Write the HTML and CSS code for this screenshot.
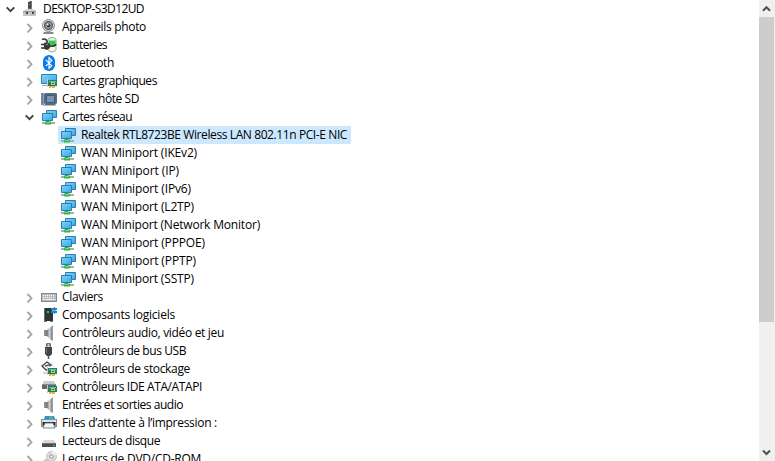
FILE: index.html
```
<!DOCTYPE html>
<html lang="fr">
<head>
<meta charset="utf-8">
<title>Gestionnaire de périphériques</title>
<link rel="stylesheet" href="styles.css">
</head>
<body>
<svg class="sprite" aria-hidden="true">
  <defs>
    <linearGradient id="blue" x1="0" y1="0" x2="1" y2="1"><stop offset="0" stop-color="#7fd6fb"/><stop offset="1" stop-color="#36a6e6"/></linearGradient>
    <linearGradient id="cone" x1="0" x2="1"><stop offset="0" stop-color="#777"/><stop offset=".5" stop-color="#d0d0d0"/><stop offset="1" stop-color="#858585"/></linearGradient>
  </defs>
  <symbol id="closed" viewBox="0 0 10 18"><path d="M2.500 6l4 4.200-4 4.200" fill="none" stroke="#a6a6a6" stroke-width="1.900"/></symbol>
  <symbol id="open" viewBox="0 0 10 18"><path d="M.700 7.300l3.800 3.800 3.800-3.800" fill="none" stroke="#404040" stroke-width="1.900"/></symbol>
  <symbol id="card" viewBox="0 0 10 9"><path d="M0 0h1v8H0z" fill="#c5c9c6"/><path d="M1 1h9v6H1z" fill="#2b7d5c"/><path d="M2 2h7v1H2z" fill="#6bbb92"/><path d="M4 3h4v3H4z" fill="#9dcab2"/><path d="M5 4h2v1H5z" fill="#2b7d5c"/><path d="M2 7h6v2H2z" fill="#edb12c"/><path d="M4 8h1v1H4z" fill="#fff"/></symbol>
  <symbol id="pc" viewBox="0 0 16 16"><path d="M6 1l3-1v8H6z" fill="#46494b"/><path d="M7 3h1v1H7z" fill="#28db45"/><path d="M9 0h1v8H9z" fill="#777"/><path d="M3 9h3v-1h4v1h3v2H3z" fill="#dfdfdf" stroke="#a8a8a8" stroke-width=".5"/><path d="M1 11h13v4H1z" fill="#c4c6c7"/><path d="M1 10.500h13" stroke="#999"/><path d="M4 11h2v2H4zM10 11h2v2h-2z" fill="#444"/></symbol>
  <symbol id="camera" viewBox="0 0 16 16"><path d="M3 13h9l1 2H2z" fill="#888"/><circle cx="7.500" cy="6.500" r="6" fill="#dcdcdc" stroke="#8a8a8a"/><circle cx="7.500" cy="6.500" r="3.900" fill="#9da2a8" stroke="#50565b" stroke-width="1.300"/><circle cx="7.500" cy="6.500" r="2" fill="#35404d"/><circle cx="6.700" cy="5.500" r="1" fill="#dcecf3"/></symbol>
  <symbol id="battery" viewBox="0 0 16 16"><path d="M7 2.500Q7 .5 11 .5t4 2v10q-1 2.500-4 2.500t-4-2.500z" fill="#f0f5ef" stroke="#819080" stroke-width=".8"/><path d="M8 3q3 1.500 6.500 0v6Q11 10.500 8 9z" fill="#2fc84b"/><path d="M8 3q3 1 6.500 0" fill="none" stroke="#96eca0"/><path d="M1 2.500q4-2 5.500 3M0 7.500h3M0 11h3" fill="none" stroke="#333" stroke-width="1.500"/><path d="M3 6l3-1 3 2v4l-3 2-3-1z" fill="#343a35"/><path d="M9 9q5 1 6-2" fill="none" stroke="#333" stroke-width="1.500"/><path d="M5 7.500l2-.5" stroke="#9aa69c"/></symbol>
  <symbol id="bluetooth" viewBox="0 0 16 16"><rect x="2" y="0" width="12" height="16" rx="6" fill="#087bea"/><path d="M4.800 4.800l6 6L8 13.300V2.700l2.800 2.700-6 5.800" fill="none" stroke="#fff" stroke-width="1.150"/></symbol>
  <symbol id="gpu" viewBox="0 0 16 16"><path d="M.5 1.500h15v9H.5z" fill="url(#blue)" stroke="#357fa9"/><path d="M1 12h6v1H1z" fill="#9bafb9"/><use href="#card" x="6" y="6" width="10" height="9"/></symbol>
  <symbol id="sd" viewBox="0 0 16 16"><path d="M0 2h3v12H0z" fill="#8999aa"/><path d="M1 2v12" stroke="#5c7188"/><path d="M4 2h11l1 1v9l-2 2H4l-1-2V3z" fill="#536d89"/><path d="M5.500 4.500h8v6l-1 1h-7z" fill="#7d94ad" stroke="#3e5877"/><path d="M2 14.500h13" stroke="#b5b9bd"/></symbol>
  <symbol id="net" viewBox="0 0 16 16"><path d="M5.500 1.500h10v7h-10z" fill="url(#blue)" stroke="#2e7cac"/><path d="M1.500 4.500h10v7h-10z" fill="url(#blue)" stroke="#2e7cac"/><path d="M5 12h3v1H5z" fill="#58747c"/><path d="M1 13h13v2H1z" fill="#9ab89c"/><path d="M4 12.500h6v3H4z" fill="#37b344"/><path d="M5 13h4v1H5z" fill="#75db78"/></symbol>
  <symbol id="keyboard" viewBox="0 0 16 16"><path d="M0 4h16v9H0z" fill="#85898c"/><path d="M1 5h14v7H1z" fill="#b9bbbd"/><path d="M2 6.500h12M2 8.500h12" stroke="#fff" stroke-dasharray="1 1"/><path d="M2 10.500h2m1 0h6m1 0h2" stroke="#f8f8f8"/></symbol>
  <symbol id="software" viewBox="0 0 16 16"><path d="M4 1h8v13H4z" fill="#303436"/><path d="M3 1h1v13H3z" fill="#686c6e"/><path d="M6 4h2v2H6z" fill="#16e53b"/><path d="M3 14h3v1H3zM9 14h3v1H9z" fill="#777"/><path d="M11 1h2V0h1v1h2v2h-1v1h1v2h-2v1h-1V6h-3V4h1V3h-1V1z" fill="#2586c6"/><path d="M11 3.500h4" stroke="#64bae9"/></symbol>
  <symbol id="speaker" viewBox="0 0 16 16"><path d="M3 5h3v6H3z" fill="#70777b"/><path d="M6 5l5-4v15l-5-5z" fill="url(#cone)"/><path d="M11 1l1-1v16l-1-1z" fill="#999"/><path d="M4 5v6" stroke="#a3abb0"/></symbol>
  <symbol id="usb" viewBox="0 0 16 16"><path d="M5.500.5h4V5h-4z" fill="#d3d3d3" stroke="#777"/><path d="M6 2h1m1 0h1" stroke="#333"/><path d="M4 4h7v7l-2 2H6l-2-2z" fill="#444"/><path d="M5.500 5v5" stroke="#777"/><path d="M7.500 12v4" stroke="#555" stroke-width="1.500"/></symbol>
  <symbol id="storage" viewBox="0 0 16 16"><path d="M9 3L6 1 1 5l4 4 3-1" fill="none" stroke="#444" stroke-width="1.400"/><path d="M4 5l4-1" stroke="#555" stroke-width="1.500"/><path d="M8 2l4 2-4 2z" fill="#666"/><path d="M2 12h5" stroke="#aaa"/><use href="#card" x="6" y="6" width="10" height="9"/></symbol>
  <symbol id="ide" viewBox="0 0 16 16"><path d="M3 2h10l2 4H1z" fill="#ccc"/><path d="M1 6h14v4H1z" fill="#62666a"/><path d="M1 5.500h14" stroke="#888"/><path d="M11 5h2v1h-2z" fill="#35d84b"/><use href="#card" x="6" y="6" width="10" height="9"/></symbol>
  <symbol id="printer" viewBox="0 0 16 16"><path d="M4 1h9l1 3H3z" fill="#2795d0"/><path d="M8 1h4v3H8z" fill="#50a9b4"/><path d="M0 4h16v8H0z" fill="#8b9094"/><path d="M1 5h14v2H1z" fill="#e0e2e3"/><path d="M2 7h12v3H2z" fill="#252b30"/><path d="M4 8h8l2 5H2z" fill="#f4f7f8" stroke="#656b6e" stroke-width=".8"/></symbol>
  <symbol id="disk" viewBox="0 0 16 16"><path d="M3 7h10l2 3H1z" fill="#d8d9d9"/><path d="M1 10h14v4H1z" fill="#4b4e50"/><path d="M1 10.500h14" stroke="#777"/><path d="M12 12h2v1h-2z" fill="#25df46"/></symbol>
  <symbol id="dvd" viewBox="0 0 16 16"><circle cx="10.500" cy="5.500" r="5" fill="#dcdcdc" stroke="#adadad" stroke-width=".7"/><path d="M10 5l1-5q4 0 5 4z" fill="#eee"/><circle cx="10.500" cy="5.500" r="1.700" fill="#fff" stroke="#888"/><path d="M4 8l-3 3v4h13v-4z" fill="#c6c6c6"/></symbol>
</svg>
<main class="window">
  <div class="tree" id="tree"></div>
  <div class="scrollbar">
    <svg class="arrow" viewBox="0 0 16 17"><path d="M4 10.700l3.500-3.500 3.500 3.500" /></svg>
    <div class="thumb"></div>
    <svg class="arrow arrow-down" viewBox="0 0 16 17"><path d="M4 6.500l3.500 3.500 3.500-3.500" /></svg>
  </div>
</main>
<script src="tree.js"></script>
</body>
</html>
```
FILE: styles.css
```
body {
  margin: 0;
  background: #fff;
  color: #000;
  font: 12px/18px "Open Sans", "Noto Sans", sans-serif;
}
.sprite { position: absolute; width: 0; height: 0; }
.window { display: flex; width: 775px; height: 461px; overflow: hidden; }
.tree { flex: 1; overflow: hidden; }
.row { display: flex; align-items: center; height: 18px; white-space: nowrap; }
.level-0 { padding-left: 6px; }
.level-1 { padding-left: 25px; }
.level-2 { padding-left: 60px; }
.chevron { width: 10px; height: 18px; margin-right: 6px; flex: none; }
.icon { width: 16px; height: 16px; flex: none; }
.label { height: 18px; padding: 0 4px 0 5px; }
.selected { background: linear-gradient(#cce8ff, #cce8ff) 58px 0 / 293px 18px no-repeat; }
.scrollbar { display: flex; flex-direction: column; width: 16px; background: #f0f0f0; }
.arrow { width: 16px; height: 17px; fill: none; stroke: #505050; stroke-width: 2; flex: none; }
.thumb { width: 15px; height: 305px; background: #cdcdcd; }
.arrow-down { margin-top: auto; }
```
FILE: tree.js
```
// level, icon, label, label width in px, chevron state
const rows = [
  [0, "pc", "DESKTOP-S3D12UD", 101, "open"],
  [1, "camera", "Appareils photo", 84, "closed"],
  [1, "battery", "Batteries", 45, "closed"],
  [1, "bluetooth", "Bluetooth", 52, "closed"],
  [1, "gpu", "Cartes graphiques", 95, "closed"],
  [1, "sd", "Cartes hôte SD", 77, "closed"],
  [1, "net", "Cartes réseau", 70, "open"],
  [2, "net", "Realtek RTL8723BE Wireless LAN 802.11n PCI-E NIC", 266, "selected"],
  [2, "net", "WAN Miniport (IKEv2)", 116],
  [2, "net", "WAN Miniport (IP)", 98],
  [2, "net", "WAN Miniport (IPv6)", 110],
  [2, "net", "WAN Miniport (L2TP)", 113],
  [2, "net", "WAN Miniport (Network Monitor)", 179],
  [2, "net", "WAN Miniport (PPPOE)", 124],
  [2, "net", "WAN Miniport (PPTP)", 115],
  [2, "net", "WAN Miniport (SSTP)", 113],
  [1, "keyboard", "Claviers", 41, "closed"],
  [1, "software", "Composants logiciels", 113, "closed"],
  [1, "speaker", "Contrôleurs audio, vidéo et jeu", 162, "closed"],
  [1, "usb", "Contrôleurs de bus USB", 124, "closed"],
  [1, "storage", "Contrôleurs de stockage", 128, "closed"],
  [1, "ide", "Contrôleurs IDE ATA/ATAPI", 140, "closed"],
  [1, "speaker", "Entrées et sorties audio", 121, "closed"],
  [1, "printer", "Files d’attente à l’impression :", 155, "closed"],
  [1, "disk", "Lecteurs de disque", 98, "closed"],
  [1, "dvd", "Lecteurs de DVD/CD-ROM", 139, "closed"]
];
const tree = document.getElementById("tree");
for (const [level, icon, text, width, state] of rows) {
  const row = document.createElement("div");
  row.className = `row level-${level}${state === "selected" ? " selected" : ""}`;
  const chevron = level < 2 ? `<svg class="chevron"><use href="#${state}"/></svg>` : "";
  row.innerHTML = `${chevron}<svg class="icon"><use href="#${icon}"/></svg><span class="label"><span>${text}</span></span>`;
  tree.append(row);
  const label = row.querySelector(".label span");
  const natural = label.getBoundingClientRect().width;
  label.style.letterSpacing = `${(width - natural) / text.length}px`;
}
```
